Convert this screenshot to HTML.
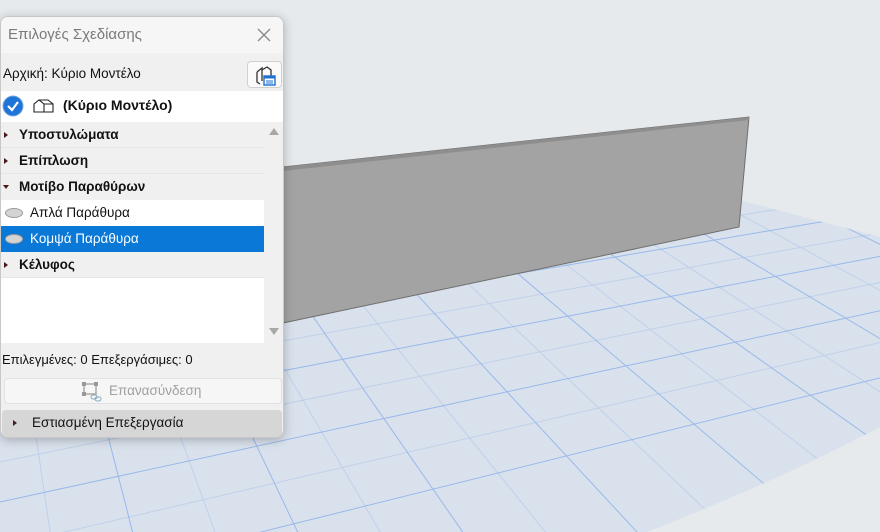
<!DOCTYPE html>
<html><head><meta charset="utf-8"><style>
*{margin:0;padding:0;box-sizing:border-box}
html,body{width:880px;height:532px;overflow:hidden}
body{background:#e6eaed;font-family:"Liberation Sans","DejaVu Sans",sans-serif;position:relative}
svg.bg{position:absolute;left:0;top:0;display:block}
.panel{position:absolute;left:0;top:16px;width:284px;height:422px;background:#f0f0f0;border:1px solid #c8c8c8;border-radius:8px;box-shadow:0 2px 10px rgba(0,0,0,.25);overflow:hidden;font-size:13.5px;color:#111}
.abs{position:absolute}
.row{position:absolute;left:0;width:263px;height:26px;line-height:26px}
.b{font-weight:bold;padding-left:18px}
.tri{position:absolute;left:3px;top:10px;width:0;height:0;border-left:4px solid #4a1a1a;border-top:3px solid transparent;border-bottom:3px solid transparent}
.trid{position:absolute;left:2px;top:11px;width:0;height:0;border-top:4px solid #4a1a1a;border-left:3px solid transparent;border-right:3px solid transparent}
.eye{position:absolute;left:4px;top:8px;width:18px;height:10px;border-radius:50%;background:#d4d4d4;border:1px solid #999}
</style></head><body>
<svg class="bg" width="880" height="532">
<defs><clipPath id="fl"><path d="M0,240 L739,200 L880,237 L880,427 Q780,480 647,532 L0,532 Z"/></clipPath></defs>
<path d="M0,240 L739,200 L880,237 L880,427 Q780,480 647,532 L0,532 Z" fill="#d9e1ec"/>
<g clip-path="url(#fl)" stroke="#8fb3ea" stroke-width="1" fill="none">
<g opacity=".85">
<line x1="-60" y1="-220" x2="150" y2="600"/><line x1="-60" y1="-220" x2="330" y2="600"/><line x1="-60" y1="-220" x2="510" y2="600"/><line x1="-60" y1="-220" x2="700" y2="600"/><line x1="-60" y1="-220" x2="900" y2="600"/><line x1="-60" y1="-220" x2="1100" y2="600"/><line x1="-60" y1="-220" x2="1320" y2="600"/><line x1="-60" y1="-220" x2="1600" y2="600"/><line x1="-60" y1="-220" x2="1900" y2="600"/>
<line x1="3000" y1="-150" x2="0" y2="310"/><line x1="3000" y1="-150" x2="0" y2="362"/><line x1="3000" y1="-150" x2="0" y2="425"/><line x1="3000" y1="-150" x2="0" y2="502"/><line x1="3000" y1="-150" x2="0" y2="597"/>
</g>
<g opacity=".35">
<line x1="-60" y1="-220" x2="60" y2="600"/><line x1="-60" y1="-220" x2="240" y2="600"/><line x1="-60" y1="-220" x2="420" y2="600"/><line x1="-60" y1="-220" x2="600" y2="600"/><line x1="-60" y1="-220" x2="800" y2="600"/><line x1="-60" y1="-220" x2="1000" y2="600"/><line x1="-60" y1="-220" x2="1200" y2="600"/><line x1="-60" y1="-220" x2="1450" y2="600"/><line x1="-60" y1="-220" x2="1750" y2="600"/>
<line x1="3000" y1="-150" x2="0" y2="290"/><line x1="3000" y1="-150" x2="0" y2="335"/><line x1="3000" y1="-150" x2="0" y2="392"/><line x1="3000" y1="-150" x2="0" y2="462"/><line x1="3000" y1="-150" x2="0" y2="547"/>
</g>
</g>
<polygon points="283,167 749,117 739,227 283,323" fill="#a3a3a3" stroke="#6e6e6e" stroke-width="1"/>
<polygon points="283,167 749,117 749,120 283,171" fill="#8e8e8e"/>
</svg>

<div class="panel">
 <div class="abs" style="left:0;top:0;width:284px;height:36px;background:#f6f6f6"></div>
 <div class="abs" style="left:7px;top:9px;font-size:15px;color:#7a7a7a">Επιλογές Σχεδίασης</div>
 <svg class="abs" style="left:256px;top:11px" width="14" height="14"><path d="M1,1 L13,13 M13,1 L1,13" stroke="#888" stroke-width="1.3"/></svg>
 <div class="abs" style="left:2px;top:49px">Αρχική: Κύριο Μοντέλο</div>
 <div class="abs" style="left:246px;top:44px;width:35px;height:27px;background:#fafafa;border:1px solid #d0d0d0;border-radius:4px"></div>
 <svg class="abs" style="left:252px;top:47px" width="26" height="22"><path d="M4,8 L9,4 L9,17 M9,6 L14,3 L18,6 L18,12 M4,8 L4,18 L7,20" stroke="#333" stroke-width="1.3" fill="none"/><rect x="11" y="12" width="11" height="9" fill="#fff" stroke="#1d6fd0" stroke-width="1.4"/><rect x="11" y="12" width="11" height="2.5" fill="#1d6fd0"/><path d="M13,17 h7 M13,19 h7" stroke="#1d6fd0"/></svg>
 <div class="abs" style="left:0;top:74px;width:284px;height:31px;background:#fff"></div>
 <svg class="abs" style="left:1px;top:78px" width="22" height="22"><circle cx="11" cy="11" r="10" fill="#1e74d8" stroke="#7aa8e0"/><path d="M6,11 L10,15 L16,7" stroke="#fff" stroke-width="2.2" fill="none"/></svg>
 <svg class="abs" style="left:32px;top:81px" width="22" height="16"><path d="M1,14 L1,6 L6,2 L11,6 L11,14 Z M6,2 L15,2 L20,6 L20,14 L11,14 M11,6 L20,6" stroke="#222" stroke-width="1.1" fill="none"/></svg>
 <div class="abs" style="left:62px;top:80px;font-weight:bold;font-size:14px">(Κύριο Μοντέλο)</div>
 <div class="abs" style="left:0;top:105px;width:263px;height:221px;background:#fff"></div>
 <div class="row" style="top:105px;background:#f0f0f0;border-bottom:1px solid #e6e6e6"><div class="tri"></div><span class="b">Υποστυλώματα</span></div>
 <div class="row" style="top:131px;background:#f0f0f0;border-bottom:1px solid #e6e6e6"><div class="tri"></div><span class="b">Επίπλωση</span></div>
 <div class="row" style="top:157px;background:#f0f0f0"><div class="trid"></div><span class="b">Μοτίβο Παραθύρων</span></div>
 <div class="row" style="top:183px;background:#fff"><div class="eye"></div><span style="padding-left:29px">Απλά Παράθυρα</span></div>
 <div class="row" style="top:209px;background:#0a78d7;color:#fff"><div class="eye"></div><span style="padding-left:29px">Κομψά Παράθυρα</span></div>
 <div class="row" style="top:235px;background:#f0f0f0;border-bottom:1px solid #e6e6e6"><div class="tri"></div><span class="b">Κέλυφος</span></div>
 <div class="abs" style="left:263px;top:105px;width:21px;height:221px;background:#f0f0f0"></div>
 <div class="abs" style="left:268px;top:111px;border-bottom:7px solid #a8a8a8;border-left:5px solid transparent;border-right:5px solid transparent"></div>
 <div class="abs" style="left:268px;top:311px;border-top:7px solid #a8a8a8;border-left:5px solid transparent;border-right:5px solid transparent"></div>
 <div class="abs" style="left:1px;top:335px;font-size:13px">Επιλεγμένες: 0 Επεξεργάσιμες: 0</div>
 <div class="abs" style="left:3px;top:361px;width:278px;height:26px;background:#f6f6f6;border:1px solid #e2e2e2;border-radius:4px"></div>
 <svg class="abs" style="left:80px;top:364px" width="24" height="22"><path d="M3,3 h12 v10 h-12 z" stroke="#aaa" stroke-width="1.5" fill="none"/><rect x="1" y="1" width="4" height="4" fill="#999"/><rect x="13" y="1" width="4" height="4" fill="#999"/><rect x="1" y="11" width="4" height="4" fill="#999"/><rect x="10" y="14" width="6" height="4" rx="2" stroke="#8ab" fill="none"/><rect x="14" y="16" width="6" height="4" rx="2" stroke="#8ab" fill="none"/></svg>
 <div class="abs" style="left:108px;top:366px;color:#a0a0a0">Επανασύνδεση</div>
 <div class="abs" style="left:1px;top:393px;width:280px;height:27px;background:#d6d6d6;border-radius:4px"></div>
 <div class="abs" style="left:12px;top:403px;border-left:4px solid #4a1a1a;border-top:3px solid transparent;border-bottom:3px solid transparent"></div>
 <div class="abs" style="left:31px;top:398px">Εστιασμένη Επεξεργασία</div>
</div>
</body></html>
